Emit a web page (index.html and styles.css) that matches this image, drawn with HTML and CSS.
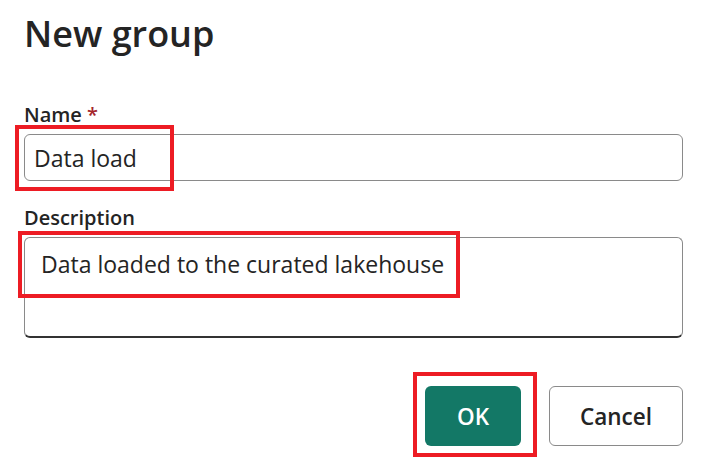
FILE: index.html
```html
<!DOCTYPE html>
<html lang="en">
<head>
<meta charset="utf-8">
<link rel="stylesheet" href="styles.css">
</head>
<body>
<div class="dialog">
  <h1 class="title">New group</h1>
  <div class="field name-field">
    <label class="label">Name <span class="req">*</span></label>
    <div class="input-wrap">
      <div class="input">Data load</div>
      <div class="mark mark-name"></div>
    </div>
  </div>
  <div class="field desc-field">
    <label class="label">Description</label>
    <div class="input-wrap">
      <div class="textarea">Data loaded to the curated lakehouse</div>
      <div class="mark mark-desc"></div>
    </div>
  </div>
  <div class="actions">
    <div class="btn-wrap">
      <button class="btn primary">OK</button>
      <div class="mark mark-ok"></div>
    </div>
    <button class="btn secondary">Cancel</button>
  </div>
</div>
</body>
</html>
```

FILE: styles.css
```css
html, body {
  margin: 0;
  padding: 0;
  background: #ffffff;
}
body {
  font-family: "Open Sans", "Noto Sans", sans-serif;
  color: #242424;
}
.dialog {
  display: flex;
  flex-direction: column;
  padding: 0 20px 15px 24px;
  width: 659px;
}
.title {
  margin: 8px 0 0 0;
  font-size: 36px;
  font-weight: 600;
  line-height: 52px;
}
.field {
  display: flex;
  flex-direction: column;
}
.name-field {
  margin-top: 42px;
}
.desc-field {
  margin-top: 24px;
}
.label {
  font-size: 20px;
  font-weight: 600;
  line-height: 26px;
  margin-bottom: 6px;
}
.req {
  color: #a4262c;
}
.input-wrap {
  position: relative;
}
.input {
  box-sizing: border-box;
  height: 47px;
  border: 1px solid #8a8a8a;
  border-radius: 6px;
  padding: 0 9px;
  display: flex;
  align-items: center;
  font-size: 23px;
  line-height: 30px;
}
.textarea {
  box-sizing: border-box;
  height: 101px;
  border: 1px solid #8a8a8a;
  border-bottom: 2px solid #333333;
  border-radius: 6px;
  padding: 11px 16px;
  font-size: 23px;
  line-height: 30px;
}
.mark {
  position: absolute;
  border: 4px solid #ed1c24;
  box-sizing: border-box;
}
.mark-name {
  left: -9px;
  top: -9px;
  width: 159px;
  height: 66px;
}
.mark-desc {
  left: -6px;
  top: -6px;
  width: 442px;
  height: 67px;
}
.actions {
  display: flex;
  justify-content: flex-end;
  gap: 28px;
  margin-top: 48px;
}
.btn-wrap {
  position: relative;
  display: flex;
}
.btn {
  box-sizing: border-box;
  height: 60px;
  border-radius: 6px;
  font-family: "Open Sans", "Noto Sans", sans-serif;
  font-size: 22.5px;
  font-weight: 600;
  cursor: pointer;
  padding: 0;
}
.primary {
  width: 96px;
  background: #137866;
  color: #ffffff;
  border: none;
}
.secondary {
  width: 134px;
  background: #ffffff;
  color: #242424;
  border: 1px solid #8a8a8a;
}
.mark-ok {
  left: -12px;
  top: -14px;
  width: 124px;
  height: 85px;
}
```
